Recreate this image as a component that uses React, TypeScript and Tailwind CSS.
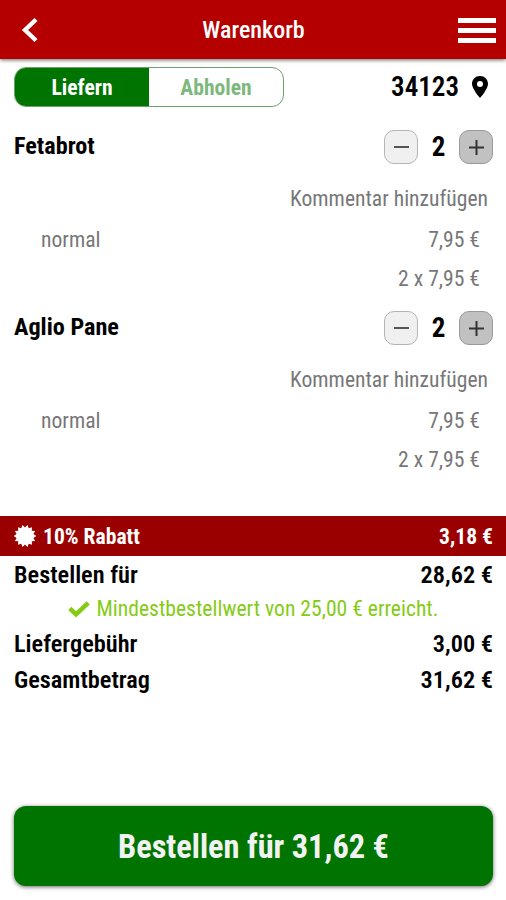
import { useState } from 'react';

const items = [
  { id: 1, name: 'Fetabrot', variant: 'normal', price: '7,95 €', amount: 2 },
  { id: 2, name: 'Aglio Pane', variant: 'normal', price: '7,95 €', amount: 2 },
];

function Seal() {
  const points = Array.from({ length: 28 }, (_, i) => {
    const r = i % 2 === 0 ? 11.3 : 8.6;
    const a = ((i + 1) * Math.PI) / 14;
    return `${(11 + r * Math.sin(a)).toFixed(2)},${(11 - r * Math.cos(a)).toFixed(2)}`;
  }).join(' ');

  return (
    <svg className="w-[22px] h-[22px] shrink-0 mb-[2px]" viewBox="0 0 22 22" fill="currentColor">
      <polygon points={points} />
    </svg>
  );
}

function Check() {
  return (
    <svg className="w-[22px] h-[17px]" viewBox="0 0 22 17" fill="none" stroke="currentColor" strokeWidth="4.6">
      <path d="M1.8 7.4 L8 13.4 L20.2 1.8" />
    </svg>
  );
}

function Pin() {
  return (
    <svg className="w-[16px] h-[22px] ml-[13px] mr-[5px]" viewBox="0 0 16 22" fill="currentColor" fillRule="evenodd">
      <path d="M8 0 C3.5 0 0 3.4 0 7.8 C0 13.2 8 22 8 22 C8 22 16 13.2 16 7.8 C16 3.4 12.5 0 8 0 Z M8 4.9 A3 3 0 1 1 8 10.9 A3 3 0 1 1 8 4.9 Z" />
    </svg>
  );
}

function Header() {
  return (
    <header className="relative flex items-center justify-between h-[59px] pl-[21px] pr-[10px] bg-[#b50000] text-white shadow-[0_1px_4px_rgba(0,0,0,0.6)]">
      <button className="w-[28px]">
        <svg className="w-[18px] h-[26px]" viewBox="0 0 18 26" fill="none" stroke="currentColor" strokeWidth="4.4">
          <path d="M15 2.5 L4 13 L15 23.5" />
        </svg>
      </button>
      <h1 className="pt-px text-[24px] leading-none font-medium">Warenkorb</h1>
      <button className="flex flex-col gap-[5px] w-[38px] pt-[2px]">
        <span className="h-[5px] bg-white" />
        <span className="h-[5px] bg-white" />
        <span className="h-[5px] bg-white" />
      </button>
    </header>
  );
}

function CartItem({ item }: { item: (typeof items)[number] }) {
  return (
    <section className="h-[181px] pl-[14px] pr-[13px]">
      <div className="flex items-center justify-between h-[42px]">
        <h2 className="text-[24.2px] leading-none font-bold pb-[2px]">{item.name}</h2>
        <div className="flex items-center">
          <button className="flex items-center justify-center w-[34px] h-[34px] rounded-[10px] border border-[#b5b5b5] bg-[#f0f0f0]">
            <span className="w-[15px] h-[2px] bg-[#555]" />
          </button>
          <span className="w-[41px] pt-px text-center text-[27px] leading-none font-bold">{item.amount}</span>
          <button className="flex items-center justify-center w-[34px] h-[34px] rounded-[10px] border border-[#999] bg-[#c1c1c1]">
            <svg className="w-[15px] h-[15px]" viewBox="0 0 15 15" stroke="#333" strokeWidth="2">
              <path d="M0 7.5 H15 M7.5 0 V15" />
            </svg>
          </button>
        </div>
      </div>
      <div className="text-[21.6px] text-[#777]">
        <p className="mt-[11px] h-[41px] leading-[40px] pr-[5px] text-right">Kommentar hinzufügen</p>
        <div className="flex justify-between h-[40px] leading-[40px] pl-[27px] pr-[13px]">
          <span>{item.variant}</span>
          <span>{item.price}</span>
        </div>
        <p className="h-[38px] leading-[38px] pr-[13px] text-right">
          {item.amount} x {item.price}
        </p>
      </div>
    </section>
  );
}

function SumRow({ label, value }: { label: string; value: string }) {
  return (
    <div className="flex items-center justify-between h-[36px] pt-[2px] pl-[14px] pr-[13px] text-[24.3px] leading-none font-semibold">
      <span>{label}</span>
      <span>{value}</span>
    </div>
  );
}

export default function App() {
  const [delivery, setDelivery] = useState(true);

  return (
    <div className="flex flex-col w-[506px] h-[900px] overflow-hidden bg-white text-black font-['Roboto_Condensed',Roboto,sans-serif] [font-stretch:75%]">
      <Header />

      <div className="flex items-center justify-between mt-[8px] pl-[14px] pr-[13px]">
        <div className="flex w-[270px] h-[40px] rounded-[12px] border border-[#6aa06a] overflow-hidden text-[21.6px] leading-none font-bold">
          <button
            className={`w-[134px] pt-px ${delivery ? 'bg-[#007400] text-white' : 'text-[#7db87d]'}`}
            onClick={() => setDelivery(true)}
          >
            Liefern
          </button>
          <button
            className={`w-[134px] pt-px ${delivery ? 'text-[#7db87d]' : 'bg-[#007400] text-white'}`}
            onClick={() => setDelivery(false)}
          >
            Abholen
          </button>
        </div>
        <div className="flex items-center text-[27px] leading-none font-semibold">
          34123
          <Pin />
        </div>
      </div>

      <main className="mt-[19px] h-[390px]">
        {items.map((item) => (
          <CartItem key={item.id} item={item} />
        ))}
      </main>

      <div className="flex items-center justify-between h-[40px] pt-[2px] pl-[14px] pr-[13px] bg-[#9a0000] text-white text-[21.6px] leading-none font-bold">
        <span className="flex items-center gap-[7px]">
          <Seal />
          10% Rabatt
        </span>
        <span>3,18 €</span>
      </div>
      <SumRow label="Bestellen für" value="28,62 €" />
      <p className="flex items-center justify-center h-[33px] pt-px gap-[7px] text-[21.6px] leading-none text-[#84cc14]">
        <Check />
        Mindestbestellwert von 25,00 € erreicht.
      </p>
      <SumRow label="Liefergebühr" value="3,00 €" />
      <SumRow label="Gesamtbetrag" value="31,62 €" />

      <button className="mt-auto mb-[14px] ml-[14px] mr-[13px] h-[80px] pt-[3px] rounded-[12px] bg-[#007400] text-[#f2f2f2] text-[32.4px] leading-none font-bold shadow-[0_1px_4px_rgba(0,0,0,0.6)]">
        Bestellen für 31,62 €
      </button>
    </div>
  );
}
